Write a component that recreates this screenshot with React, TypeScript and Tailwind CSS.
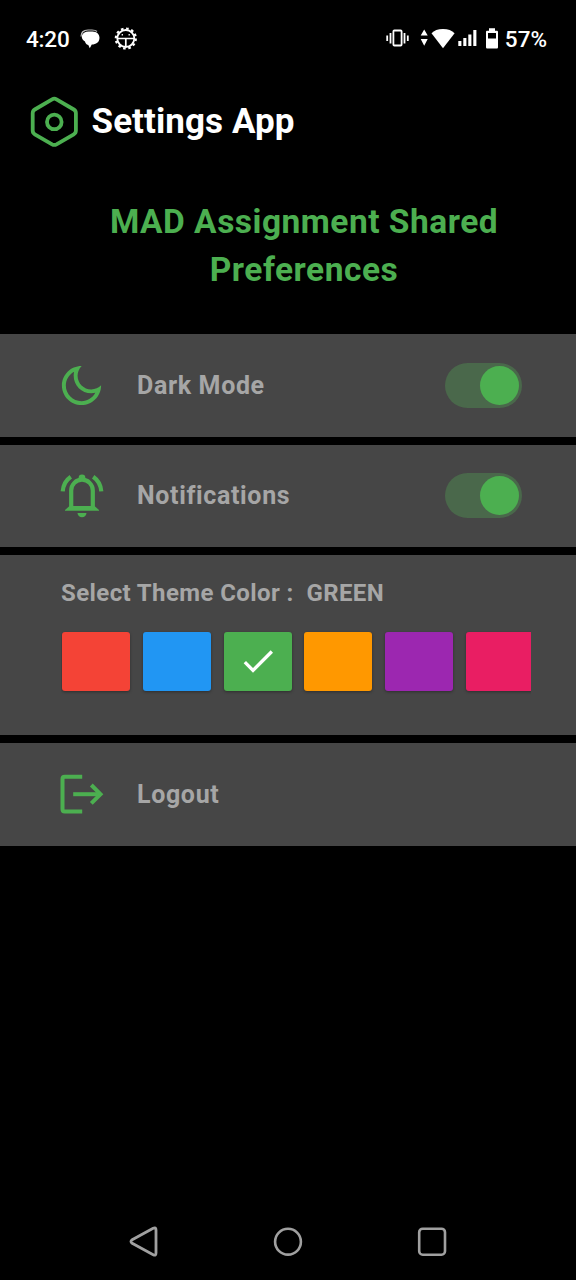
import type { ReactNode } from "react";
import { RiMoonLine } from "react-icons/ri";
import { MdDone } from "react-icons/md";

const swatches = [
  { name: "RED", bg: "bg-[#f44336]" },
  { name: "BLUE", bg: "bg-[#2196f3]" },
  { name: "GREEN", bg: "bg-[#4caf50]" },
  { name: "ORANGE", bg: "bg-[#ff9800]" },
  { name: "PURPLE", bg: "bg-[#9c27b0]" },
  { name: "PINK", bg: "bg-[#e91e63]" },
];

function StatusBar() {
  return (
    <div className="flex h-[78px] items-center justify-between pr-[29px] pl-[26px] text-[22.5px] font-medium text-white">
      <div className="flex items-center">
        <span className="w-[54px] pt-[2px] tracking-[-0.2px]">4:20</span>
        <svg className="h-5 w-[20px]" viewBox="0 0 20 20">
          <path d="M1 7.500C1 3.300 4 1 8 1h4c2.500 0 4 .5 5 1.500" fill="none" stroke="#bbb" strokeWidth="1.200" />
          <path d="M1.800 7C2.500 4 5 2.400 8.500 2.400h4c4.200 0 7 2.800 7 6.300 0 4.500-3.500 6.800-7.700 6.800L9.800 19.300l-1.500-3.300C6 15.500 5.300 13.800 5 12.500 3 11.500 1.500 9.500 1.800 7z" fill="#fff" />
        </svg>
        <svg className="ml-[14px] h-6 w-6" viewBox="0 0 24 24" fill="none" stroke="#fff">
          <circle cx="11.800" cy="11.500" r="8.500" strokeWidth="1.800" />
          <circle cx="11.800" cy="11.500" r="10" strokeWidth="2.200" strokeDasharray="2.600 2.636" />
          <path d="M3.500 11.500h16.600M11.800 12v8" strokeWidth="1.700" />
          <path d="M8.300 7v1.600M15.200 7v1.600" strokeWidth="1.300" />
        </svg>
      </div>
      <div className="flex items-center">
        <svg className="h-5 w-[23px]" viewBox="0 0 23 20" fill="none" stroke="#fff">
          <rect x="7.400" y="1.500" width="8.200" height="15" rx="1" strokeWidth="1.800" />
          <path d="M4.500 4v10.500M18.500 4v10.500M1.200 6.500v5.500M21.800 6.500v5.500" strokeWidth="1.800" />
        </svg>
        <svg className="ml-[11px] h-[22px] w-[35px]" viewBox="0 0 35 22" fill="#fff">
          <path d="M.7 7.500L4.200 1.400l3.500 6.100zM.7 10.900h7L4.200 17.800z" />
          <path d="M11.500 5.300C14 2.300 18 .9 23 .9s9 1.400 11.600 4.400L23 20.300z" />
        </svg>
        <svg className="ml-[3px] h-[20px] w-[19px]" viewBox="0 0 19 20" fill="#fff">
          <path d="M.3 12h3.100v5H.3zM5.300 9h3.100v8H5.300zM10.300 5.500h3.100v11.500h-3.100zM15.300 1h3.100v16h-3.100z" />
        </svg>
        <svg className="ml-[8px] h-[22px] w-[14px]" viewBox="0 0 14 22">
          <path d="M4 .3h6v2.400h1.600c.9 0 1.400.5 1.400 1.400v14.800c0 1-.5 1.500-1.500 1.500h-9C1.500 20.400 1 19.900 1 18.900V4.100c0-.9.500-1.400 1.400-1.400H4z" fill="#fff" />
          <path d="M3 5h8v5.500H3z" fill="#000" />
        </svg>
        <span className="ml-[5.500px] pt-[2px]">57%</span>
      </div>
    </div>
  );
}

function HexLogo() {
  return (
    <svg className="h-[52px] w-[48px]" viewBox="0 0 48 52" fill="none" stroke="#4caf50" strokeWidth="3.800">
      <path d="M22.100 3.300Q24.300 2 26.500 3.300L43.800 13.500Q45.900 14.700 45.900 17.200V34.600Q45.900 37.100 43.800 38.300L26.500 48.300Q24.300 49.500 22.100 48.300L4.800 38.300Q2.700 37.100 2.700 34.600V17.200Q2.700 14.700 4.800 13.500Z" />
      <circle cx="24.300" cy="25.900" r="7.300" />
    </svg>
  );
}

function BellIcon() {
  return (
    <svg className="size-12" viewBox="0 0 48 48" fill="none" stroke="#4caf50" strokeWidth="4.200">
      <path d="M13.200 36V18.500a10.800 10.800 0 0 1 21.600 0V36" />
      <path d="M11.500 34h25l4.500 4v.7H7V38z" fill="#4caf50" stroke="none" />
      <path d="M20.600 8.500V6a3.400 3.400 0 0 1 6.800 0v2.500z" fill="#4caf50" stroke="none" />
      <path d="M19.500 41h9a4.500 4.200 0 0 1-9 0z" fill="#4caf50" stroke="none" />
      <path d="M12.800 4.800Q5.500 9.900 4.700 19.400M35.200 4.800Q42.500 9.900 43.300 19.400" />
    </svg>
  );
}

function LogoutIcon() {
  return (
    <svg className="size-12" viewBox="0 0 48 48" fill="none" stroke="#4caf50" strokeWidth="4">
      <path d="M24.200 6.800H6.700q-2.200 0-2.200 2.200V39.300q0 2.200 2.200 2.200H24.200" />
      <path d="M15.200 24.200H43" />
      <path d="M33.300 15L42.500 24.200 33.300 33.400" />
    </svg>
  );
}

function Toggle() {
  return (
    <div className="flex h-[45px] w-[77px] items-center justify-end rounded-full bg-[#4a684b] pr-[3px]">
      <div className="size-[39px] rounded-full bg-[#4caf50]" />
    </div>
  );
}

function SettingRow({ icon, label, children }: { icon: ReactNode; label: string; children?: ReactNode }) {
  return (
    <section className="flex h-[102.300px] items-center bg-[#464646] pr-[54.500px] pl-[58px]">
      {icon}
      <span className="ml-[31px] flex-1 pt-px text-[25px] font-bold tracking-[0.65px] text-[#a6a6a6]">{label}</span>
      {children}
    </section>
  );
}

export default function App() {
  return (
    <div className="flex h-[1280px] w-[576px] flex-col overflow-hidden bg-black font-['Roboto',sans-serif]">
      <StatusBar />
      <header className="flex h-[88px] items-center pl-[30px]">
        <HexLogo />
        <h1 className="ml-[13.500px] text-[35px] font-bold tracking-[0.08px] text-white">Settings App</h1>
      </header>
      <h2 className="mt-[32px] ml-[32px] h-[136.300px] text-center text-[33.500px] leading-[48px] font-bold tracking-[0.5px] text-[#4caf50]">
        MAD Assignment Shared
        <br />
        Preferences
      </h2>
      <main className="flex flex-col gap-2">
        <SettingRow icon={<RiMoonLine className="mr-px size-[47px] text-[#4caf50]" />} label="Dark Mode">
          <Toggle />
        </SettingRow>
        <SettingRow icon={<BellIcon />} label="Notifications">
          <Toggle />
        </SettingRow>
        <section className="h-[180.400px] bg-[#464646] pt-[22.500px] pl-[61px]">
          <p className="h-[32px] text-[24px] leading-[32px] font-bold tracking-[0.4px] whitespace-pre text-[#a6a6a6]">
            {"Select Theme Color :  GREEN"}
          </p>
          <div className="mt-[20px] flex w-[470px] gap-[12.800px] overflow-hidden pt-[2.500px] pb-2 pl-px">
            {swatches.map((s) => (
              <div
                key={s.name}
                className={`flex h-[59px] w-[68px] shrink-0 items-center justify-center rounded-[3px] shadow-[0_1px_3px_rgba(0,0,0,0.35)] ${s.bg}`}
              >
                {s.name === "GREEN" && <MdDone className="ml-px size-[40px] text-white" />}
              </div>
            ))}
          </div>
        </section>
        <SettingRow icon={<LogoutIcon />} label="Logout" />
      </main>
      <nav className="mt-auto flex h-[77px] items-center justify-center gap-[112px]">
        <svg className="size-8" viewBox="0 0 32 32" fill="none" stroke="#a0a0a0" strokeWidth="2.800">
          <path d="M25.200 2.300Q28 .8 28 4V27Q28 30.200 25.200 28.700L4.200 17.300Q1.700 15.500 4.200 13.700Z" />
        </svg>
        <svg className="size-8" viewBox="0 0 32 32" fill="none" stroke="#a0a0a0" strokeWidth="2.600">
          <circle cx="16" cy="15.700" r="12.900" />
        </svg>
        <svg className="size-8" viewBox="0 0 32 32" fill="none" stroke="#a0a0a0" strokeWidth="2.600">
          <rect x="3.200" y="2.700" width="25.800" height="26" rx="3.500" />
        </svg>
      </nav>
    </div>
  );
}
